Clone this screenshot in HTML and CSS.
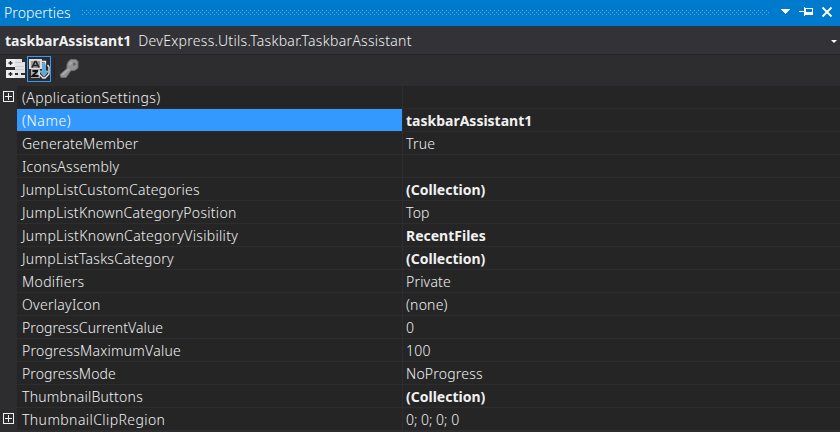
FILE: index.html
```html
<!DOCTYPE html>
<html lang="en">
<head>
<meta charset="utf-8">
<title>Properties</title>
<link rel="stylesheet" href="styles.css">
</head>
<body>
<header class="titlebar">
  <span class="title">Properties</span>
  <svg class="grip" width="689" height="6">
    <defs><pattern id="dots" width="4" height="4" patternUnits="userSpaceOnUse"><path d="M1 0h1v1H1zM3 2h1v1H3z" fill="#59a8de"/></pattern></defs>
    <rect width="689" height="5" fill="url(#dots)"/>
  </svg>
  <svg class="controls" width="56" height="26" viewBox="0 0 56 26" shape-rendering="crispEdges">
    <path d="M0 9h10L5 14z" fill="#fff"/>
    <path d="M19 11h5v1h-5zM24 7h1v9h-1zM25 8h8v7h-8zM26 9v3h6V9z" fill="#fff" fill-rule="evenodd"/>
    <path d="M42.500 7.500l9 9M51.500 7.500l-9 9" fill="none" stroke="#fff" stroke-width="1.800" shape-rendering="auto"/>
  </svg>
</header>
<div class="object"><b>taskbarAssistant1</b><span class="type">DevExpress.Utils.Taskbar.TaskbarAssistant</span>
  <svg class="drop" width="6" height="3" viewBox="0 0 6 3"><path d="M0 0h6L3 3z" fill="#fff"/></svg>
</div>
<div class="toolbar">
  <svg width="20" height="22" viewBox="0 0 20 22">
    <path d="M1 1h9v8H1zM1 12h9v8H1z" fill="#eee"/>
    <path d="M10 1h7v3h3v11h-4v2h4v3H10v-3h3v-2h-3z" fill="#e4e4e4"/>
    <path d="M3.500 5h4M5.500 3v4M3.500 16h4M5.500 14v4" stroke="#222" stroke-width="1.300"/>
    <path d="M10 4.500h8M10 8.500h9M10 11.500h9" stroke="#bbb" stroke-width=".6"/>
  </svg>
  <span class="sort"><svg width="22" height="24" viewBox="0 0 22 24">
    <path d="M1 2h13v10H1z" fill="#ddd"/><path d="M3 4h9v7H3z" fill="#999"/><path d="M3 12h9v9H3z" fill="#aaa"/>
    <path d="M4 10.500l3-6h1l3 6M5.500 8.500h4" fill="none" stroke="#222" stroke-width="1.600"/>
    <path d="M4.500 14h5l-5 5h6" fill="none" stroke="#111" stroke-width="1.900"/>
    <path d="M14 4.500h3.500v3M19.500 8l1.500 2v7l-4 4h-2l-4-4v-4" fill="none" stroke="#eee" stroke-width="1.300"/>
    <path d="M14.500 6h3v8h3l-4.500 5.500-4.500-5.500h3z" fill="#4faae8" stroke="#bcdff5" stroke-width=".5"/>
  </svg></span>
  <span class="divider"></span>
  <svg width="20" height="22" viewBox="0 0 20 22">
    <path d="M1 16.500l7-6C7.500 5.500 9 3 12 1.500h5l2 2v6c-1.300 2.500-4 3.500-7 3l-5 7H2z" fill="#929292" stroke="#707070"/>
    <path d="M3 17l7-6M10.500 7l2-3" stroke="#aaa" stroke-width="2"/><path d="M14 5.500l2-1 1 2-2.500 1.500z" fill="#626262"/>
  </svg>
</div>
<main class="grid">
  <div class="row"><i class="plus"></i><span class="name wide">(ApplicationSettings)</span><span class="value"></span></div>
  <div class="row selected"><i></i><span class="name">(Name)</span><b class="value">taskbarAssistant1</b></div>
  <div class="row"><i></i><span class="name snug">GenerateMember</span><span class="value">True</span></div>
  <div class="row"><i></i><span class="name snug">IconsAssembly</span><span class="value"></span></div>
  <div class="row"><i></i><span class="name snug">JumpListCustomCategories</span><b class="value">(Collection)</b></div>
  <div class="row"><i></i><span class="name">JumpListKnownCategoryPosition</span><span class="value">Top</span></div>
  <div class="row"><i></i><span class="name loose">JumpListKnownCategoryVisibility</span><b class="value">RecentFiles</b></div>
  <div class="row"><i></i><span class="name">JumpListTasksCategory</span><b class="value">(Collection)</b></div>
  <div class="row"><i></i><span class="name loose">Modifiers</span><span class="value">Private</span></div>
  <div class="row"><i></i><span class="name">OverlayIcon</span><span class="value">(none)</span></div>
  <div class="row"><i></i><span class="name tight">ProgressCurrentValue</span><span class="value">0</span></div>
  <div class="row"><i></i><span class="name snug">ProgressMaximumValue</span><span class="value">100</span></div>
  <div class="row"><i></i><span class="name tight">ProgressMode</span><span class="value">NoProgress</span></div>
  <div class="row"><i></i><span class="name snug">ThumbnailButtons</span><b class="value">(Collection)</b></div>
  <div class="row"><i class="plus"></i><span class="name wide">ThumbnailClipRegion</span><span class="value plain">0; 0; 0; 0</span></div>
</main>
</body>
</html>
```
FILE: styles.css
```css
* { box-sizing: border-box; }
body { margin: 0; height: 432px; overflow: hidden; background: #2d2d30; color: #f1f1f1; font: 350 14px/24px "Noto Sans", sans-serif; }
.titlebar { display: flex; height: 26px; background: #007acc; color: #fff; }
.title { width: 81px; padding-left: 4px; line-height: 25px; letter-spacing: 0.1px; }
.grip { margin-top: 10px; }
.controls { margin-left: 10px; }
.object { display: flex; align-items: center; height: 28px; padding: 2px 3px 0 5px; background: #333337; }
.type { margin-left: 7px; letter-spacing: 0.3px; }
.drop { margin-left: auto; }
.toolbar { display: flex; align-items: center; height: 32px; padding: 0 0 3px 5px; border-top: 1px solid #252526; border-bottom: 1px solid #2d2d30; }
.sort { width: 24px; height: 26px; margin-left: 2px; border: 1px solid #3399ff; }
.sort svg { display: block; }
.divider { width: 1px; height: 24px; margin: 0 4px 0 3px; background: #222; }
.row { display: flex; height: 23px; }
.row i { width: 17px; flex: none; }
.row .plus { height: 11px; width: 11px; margin: 5px 3px 0; border: 1px solid #f1f1f1; background: linear-gradient(#f1f1f1, #f1f1f1) 1px 4px / 7px 1px no-repeat, linear-gradient(#f1f1f1, #f1f1f1) 4px 1px / 1px 7px no-repeat; }
.name { width: 386px; padding-left: 5px; background: #252526; border-right: 1px solid #2d2d30; border-bottom: 1px solid #2d2d30; letter-spacing: 0.29px; }
.value { flex: 1; padding-left: 3px; background: #252526; border-bottom: 1px solid #2d2d30; letter-spacing: 0.2px; }
b.value { letter-spacing: 0; }
.selected .name { background: #3399ff; background-clip: padding-box; color: #fff; letter-spacing: 0.6px; }
.wide { letter-spacing: 0.42px; }
.loose { letter-spacing: 0.33px; }
.snug { letter-spacing: 0.23px; }
.tight { letter-spacing: 0.08px; }
.plain { letter-spacing: 0; }
```
